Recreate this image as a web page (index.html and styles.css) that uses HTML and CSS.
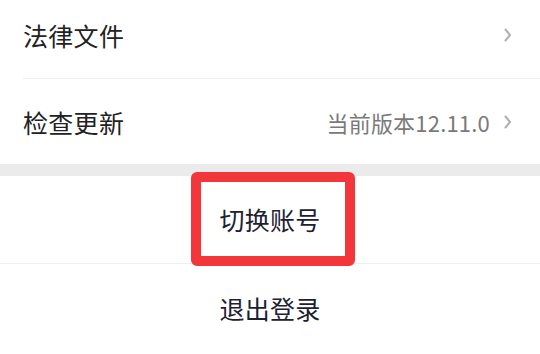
FILE: index.html
```html
<!DOCTYPE html>
<html lang="zh-CN">
<head>
<meta charset="utf-8">
<link rel="stylesheet" href="styles.css">
</head>
<body>
<div class="page">
  <div class="group">
    <div class="row">
      <span class="label">法律文件</span>
      <span class="right">
        <svg class="chev" width="8" height="14" viewBox="0 0 8 14"><path d="M1.5 1.5 L6 7 L1.5 12.5" fill="none" stroke="#b0b0b0" stroke-width="2" stroke-linecap="round" stroke-linejoin="round"/></svg>
      </span>
    </div>
    <div class="row">
      <span class="label">检查更新</span>
      <span class="right">
        <span class="value">当前版本12.11.0</span>
        <svg class="chev" width="8" height="14" viewBox="0 0 8 14"><path d="M1.5 1.5 L6 7 L1.5 12.5" fill="none" stroke="#b0b0b0" stroke-width="2" stroke-linecap="round" stroke-linejoin="round"/></svg>
      </span>
    </div>
  </div>
  <div class="band"></div>
  <div class="actions">
    <div class="action switch">
      <span class="highlight">切换账号</span>
    </div>
    <div class="action">退出登录</div>
  </div>
</div>
</body>
</html>
```
FILE: styles.css
```css
html, body {
  margin: 0;
  padding: 0;
  background: #ffffff;
}
body {
  font-family: "Noto Sans CJK SC", "Noto Sans", sans-serif;
  overflow: hidden;
}
.page {
  margin-top: -8px;
}
.group {
  padding-left: 23px;
}
.row {
  height: 86px;
  display: flex;
  align-items: center;
  justify-content: space-between;
  padding-right: 28px;
  box-sizing: border-box;
}
.row + .row {
  border-top: 1px solid #eeeeee;
}
.label {
  font-size: 25px;
  color: #222222;
  letter-spacing: 0.3px;
}
.right {
  display: flex;
  align-items: center;
  gap: 14px;
}
.value {
  font-size: 22px;
  color: #7a7a7a;
  letter-spacing: 0.2px;
}
.chev {
  display: block;
}
.band {
  height: 12px;
  background: #ebebeb;
}
.actions {
  display: flex;
  flex-direction: column;
}
.action {
  height: 87px;
  display: flex;
  align-items: center;
  justify-content: center;
  font-size: 25px;
  color: #1c2131;
  letter-spacing: 0.3px;
}
.action + .action {
  border-top: 1px solid #eeeeee;
}
.switch {
  position: relative;
}
.highlight {
  display: flex;
  align-items: center;
  justify-content: center;
  width: 164px;
  height: 94px;
  box-sizing: border-box;
  border: 10px solid #f2363a;
  border-radius: 6px;
  margin-top: -1px;
  margin-left: 6px;
  padding-right: 6px;
  position: relative;
  z-index: 1;
}
```
